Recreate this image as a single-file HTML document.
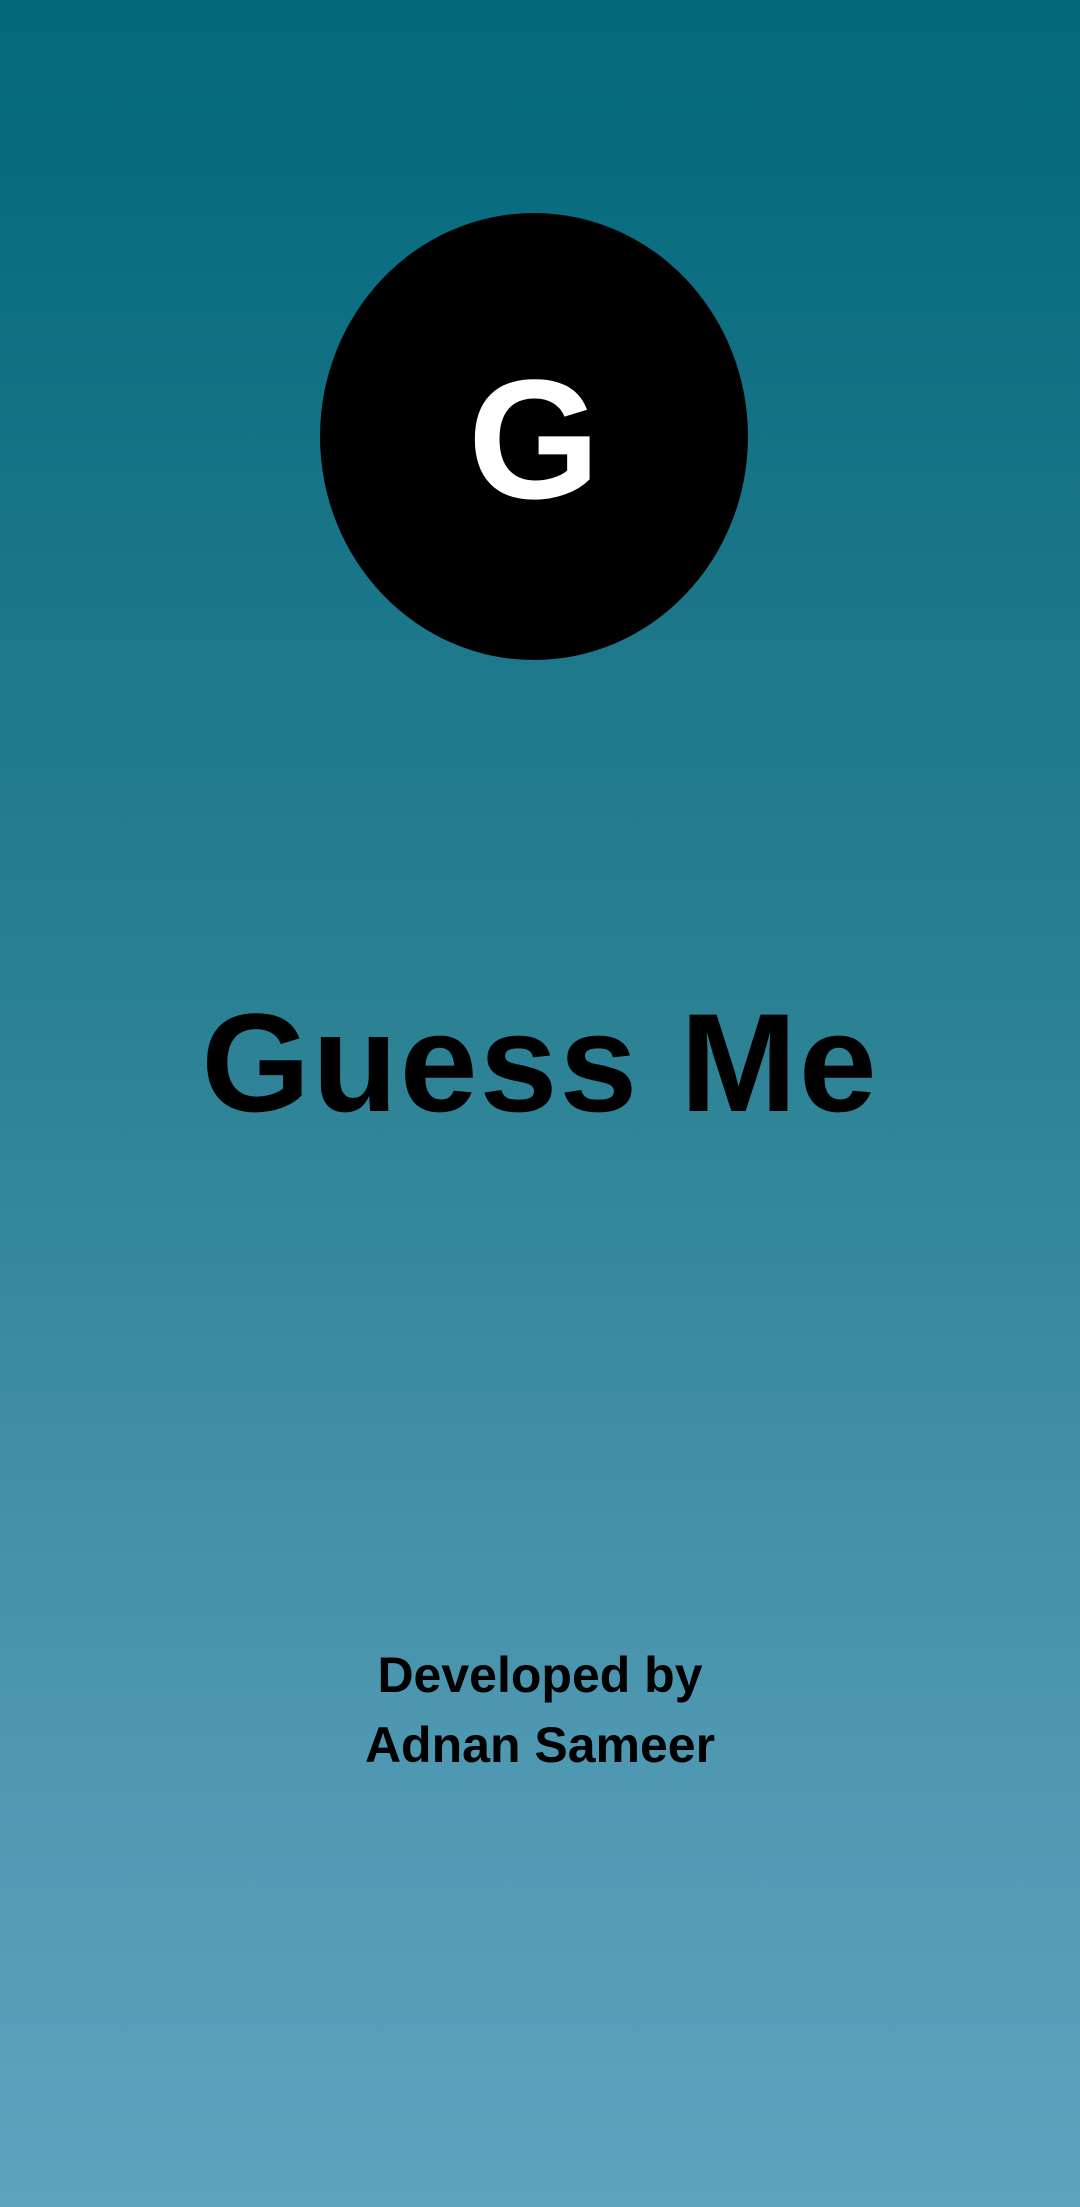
<!DOCTYPE html>
<html><head><meta charset="utf-8"><style>
html,body{margin:0;padding:0}
body{width:1080px;height:2207px;background:linear-gradient(to bottom,#02687a 0%,#2a8093 45%,#4f98b2 80%,#5fa3bf 100%);position:relative;overflow:hidden;font-family:"Liberation Sans",sans-serif;color:#000}
.c{position:absolute;left:320px;top:213px;width:428px;height:447px;border-radius:50%;background:#000}
.g{position:absolute;left:320px;width:428px;top:340px;text-align:center;color:#fff;font-weight:bold;font-size:170px;line-height:200px}
.t{position:absolute;left:0;width:1080px;top:993px;text-align:center;font-weight:bold;font-size:140px;line-height:140px;letter-spacing:2px}
.d{position:absolute;left:0;width:1080px;top:1640px;text-align:center;font-weight:bold;font-size:50px;line-height:70px}
</style></head><body>
<div class="c"></div>
<div class="g">G</div>
<div class="t">Guess Me</div>
<div class="d">Developed by<br>Adnan Sameer</div>
</body></html>
